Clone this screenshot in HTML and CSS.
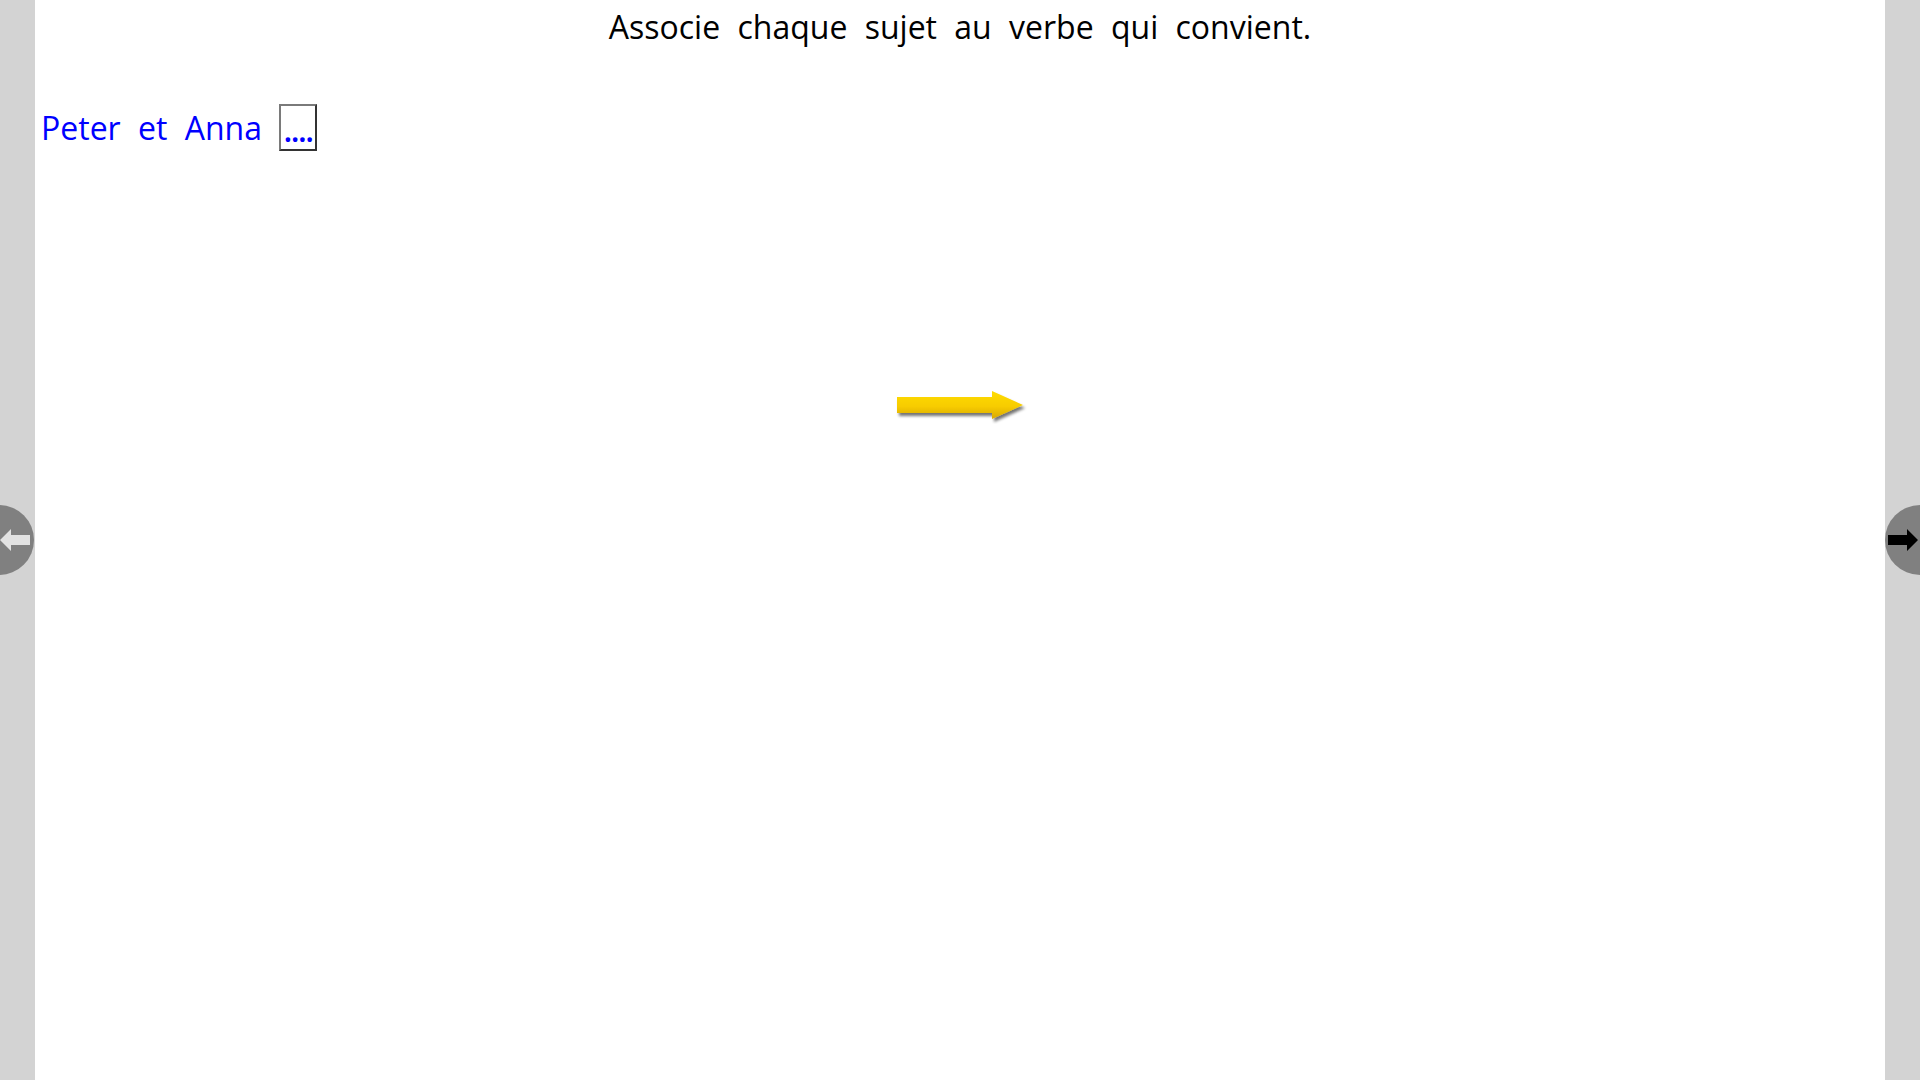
FILE: index.html
```html
<!DOCTYPE html>
<html lang="fr">
<head>
<meta charset="utf-8">
<title>Associe chaque sujet au verbe qui convient.</title>
<link rel="stylesheet" href="styles.css">
</head>
<body>
<div class="frame">
  <aside class="side side-left">
    <button class="nav nav-prev" aria-label="Précédent">
      <svg width="30" height="22" viewBox="0 0 30 22"><path d="M0 11 L11 0 L11 6 L30 6 L30 16 L11 16 L11 22 Z" fill="#e2e2e2"/></svg>
    </button>
  </aside>
  <main class="page">
    <h1 class="title">Associe chaque sujet au verbe qui convient.</h1>
    <div class="row">
      <span class="subject">Peter et Anna</span>
      <span class="blank">....</span>
    </div>
    <div class="arrow-wrap">
      <svg class="arrow" width="134" height="34" viewBox="0 0 134 34">
        <defs>
          <linearGradient id="yg" x1="0" y1="0" x2="0" y2="1">
            <stop offset="0" stop-color="#ffdc00"/>
            <stop offset="0.55" stop-color="#f7cc00"/>
            <stop offset="1" stop-color="#d9a800"/>
          </linearGradient>
          <filter id="sh" x="-10%" y="-30%" width="130%" height="180%">
            <feGaussianBlur in="SourceAlpha" stdDeviation="1.6"/>
            <feOffset dx="1.5" dy="2.5" result="b"/>
            <feComponentTransfer><feFuncA type="linear" slope="0.55"/></feComponentTransfer>
            <feMerge><feMergeNode/><feMergeNode in="SourceGraphic"/></feMerge>
          </filter>
        </defs>
        <path d="M1 7 L96 7 L96 1 L127 15 L96 29 L96 23 L1 23 Z" fill="url(#yg)" filter="url(#sh)"/>
      </svg>
    </div>
  </main>
  <aside class="side side-right">
    <button class="nav nav-next" aria-label="Suivant">
      <svg width="30" height="22" viewBox="0 0 30 22"><path d="M30 11 L19 0 L19 6 L0 6 L0 16 L19 16 L19 22 Z" fill="#000"/></svg>
    </button>
  </aside>
</div>
</body>
</html>
```
FILE: styles.css
```css
html, body {
  margin: 0;
  padding: 0;
  height: 100%;
  background: #ffffff;
  overflow: hidden;
}
.frame {
  display: flex;
  height: 1080px;
  width: 1920px;
}
.side {
  width: 35px;
  flex: 0 0 35px;
  background: #d3d3d3;
  position: relative;
}
.page {
  flex: 1;
  display: flex;
  flex-direction: column;
  font-family: "Open Sans", "Noto Sans", sans-serif;
}
.title {
  margin: 5px 0 0 0;
  font-size: 32px;
  font-weight: 400;
  line-height: 43px;
  text-align: center;
  color: #000;
  word-spacing: 9px;
}
.row {
  margin-top: 56px;
  padding-left: 6px;
  display: flex;
  align-items: center;
  gap: 17px;
  color: #0000ff;
  font-size: 32px;
}
.subject {
  word-spacing: 9px;
  line-height: 42px;
}
.blank {
  box-sizing: border-box;
  width: 38px;
  height: 47px;
  border: 2px solid;
  border-color: #7a7a7a #333 #333 #7a7a7a;
  font-size: 32px;
  line-height: 30px;
  font-weight: 600;
  display: flex;
  align-items: flex-end;
  justify-content: center;
  padding-bottom: 4px;
  letter-spacing: -1.5px;
}
.arrow-wrap {
  margin-top: 239px;
  display: flex;
  justify-content: center;
  padding-left: 6px;
}
.nav {
  position: absolute;
  top: 505px;
  width: 70px;
  height: 70px;
  border-radius: 50%;
  border: none;
  background: #808080;
  padding: 0;
  display: flex;
  align-items: center;
  cursor: pointer;
}
.nav-prev {
  left: -36px;
  justify-content: flex-end;
  padding-right: 4px;
}
.nav-next {
  left: 0;
  justify-content: flex-start;
  padding-left: 3px;
}
```
